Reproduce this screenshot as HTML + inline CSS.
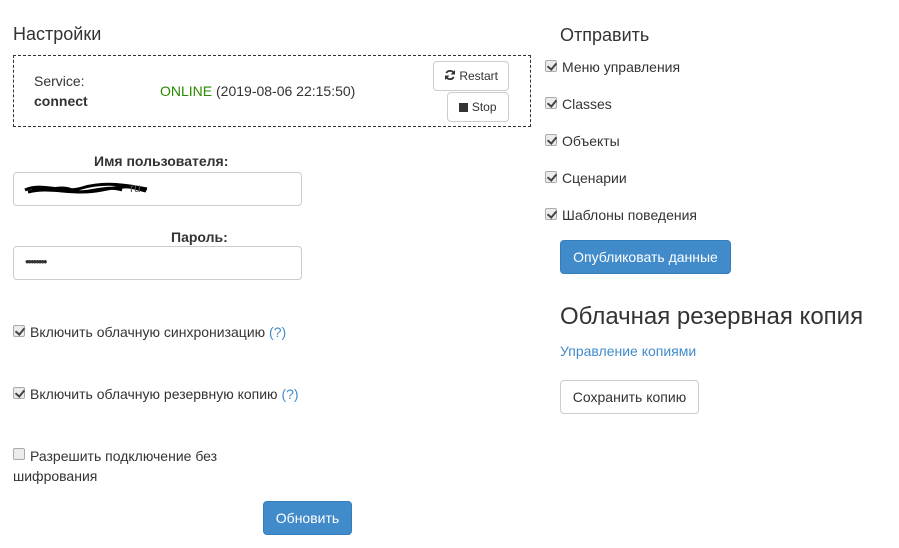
<!DOCTYPE html>
<html><head><meta charset="utf-8"><style>
*{box-sizing:border-box;margin:0;padding:0}
body{width:899px;height:548px;background:#fff;font-family:"Liberation Sans",Arial,sans-serif;font-size:14px;color:#333;position:relative;overflow:hidden}
.a{position:absolute;white-space:nowrap}
.cb{position:absolute;width:12px;height:12px;border:1px solid #aaa;border-radius:2px;background:#ececec}
.cb.on::after{content:"";position:absolute;left:3px;top:0px;width:4px;height:7px;border:solid #444;border-width:0 2px 2px 0;transform:rotate(40deg)}
.btn{position:absolute;border:1px solid #ccc;border-radius:4px;background:#fff;font-size:14px;text-align:center}
.pri{position:absolute;background:#428bca;border:1px solid #357ebd;border-radius:4px;color:#fff;font-size:14px;text-align:center}
.inp{position:absolute;border:1px solid #ccc;border-radius:4px;background:#fff}
.q{color:#428bca}
</style></head><body>
<div class="a" style="left:13px;top:24px;font-size:18px;">Настройки</div>
<div class="a" style="left:13px;top:55px;width:518px;height:72px;border:1px dashed #333"></div>
<div class="a" style="left:34px;top:73px">Service:</div>
<div class="a" style="left:34px;top:93px;font-weight:bold">connect</div>
<div class="a" style="left:160px;top:83px"><span style="color:#2a8a00">ONLINE</span> (2019-08-06 22:15:50)</div>
<div class="btn" style="left:433px;top:61px;width:76px;height:30px;line-height:28px;font-size:12px">
<svg width="12" height="12" viewBox="0 0 12 12" style="vertical-align:-1px"><path d="M10 4.5A4.3 4.3 0 0 0 2.3 4M2 7.5A4.3 4.3 0 0 0 9.7 8" fill="none" stroke="#333" stroke-width="1.8"/><path d="M11 1v4.5H6.5zM1 11V6.5h4.5z" fill="#333"/></svg> Restart</div>
<div class="btn" style="left:447px;top:92px;width:62px;height:30px;line-height:28px;font-size:12px"><span style="display:inline-block;width:9px;height:9px;background:#333;vertical-align:-1px"></span> Stop</div>
<div class="a" style="left:94px;top:153px;font-weight:bold">Имя пользователя:</div>
<div class="inp" style="left:13px;top:172px;width:289px;height:34px"></div>
<svg class="a" style="left:22px;top:180px" width="130" height="18"><path d="M3 10C20 2 40 14 60 8S100 4 125 9M6 12C30 6 50 16 80 10S110 8 124 11M10 8c15 6 25-4 40 2s30-6 50 0" stroke="#000" stroke-width="3" fill="none"/></svg>
<div class="a" style="left:130px;top:181px;font-size:12px;color:#555">ru</div>
<div class="a" style="left:171px;top:229px;font-weight:bold">Пароль:</div>
<div class="inp" style="left:13px;top:246px;width:289px;height:34px"></div>
<div class="a" style="left:25px;top:254px;font-size:13px;letter-spacing:-2px">••••••••</div>
<div class="cb on" style="left:13px;top:325px"></div>
<div class="a" style="left:30px;top:324px">Включить облачную синхронизацию <span class="q">(?)</span></div>
<div class="cb on" style="left:13px;top:387px"></div>
<div class="a" style="left:30px;top:386px">Включить облачную резервную копию <span class="q">(?)</span></div>
<div class="cb" style="left:13px;top:448px"></div>
<div class="a" style="left:30px;top:448px">Разрешить подключение без</div>
<div class="a" style="left:13px;top:468px">шифрования</div>
<div class="pri" style="left:263px;top:501px;width:89px;height:34px;line-height:32px">Обновить</div>

<div class="a" style="left:560px;top:25px;font-size:18px">Отправить</div>
<div class="cb on" style="left:545px;top:60px"></div><div class="a" style="left:562px;top:59px">Меню управления</div>
<div class="cb on" style="left:545px;top:97px"></div><div class="a" style="left:562px;top:96px">Classes</div>
<div class="cb on" style="left:545px;top:134px"></div><div class="a" style="left:562px;top:133px">Объекты</div>
<div class="cb on" style="left:545px;top:171px"></div><div class="a" style="left:562px;top:170px">Сценарии</div>
<div class="cb on" style="left:545px;top:208px"></div><div class="a" style="left:562px;top:207px">Шаблоны поведения</div>
<div class="pri" style="left:560px;top:240px;width:171px;height:34px;line-height:32px">Опубликовать данные</div>
<div class="a" style="left:560px;top:303px;font-size:24px">Облачная резервная копия</div>
<div class="a" style="left:560px;top:343px;color:#428bca">Управление копиями</div>
<div class="btn" style="left:560px;top:380px;width:139px;height:34px;line-height:32px">Сохранить копию</div>
</body></html>
